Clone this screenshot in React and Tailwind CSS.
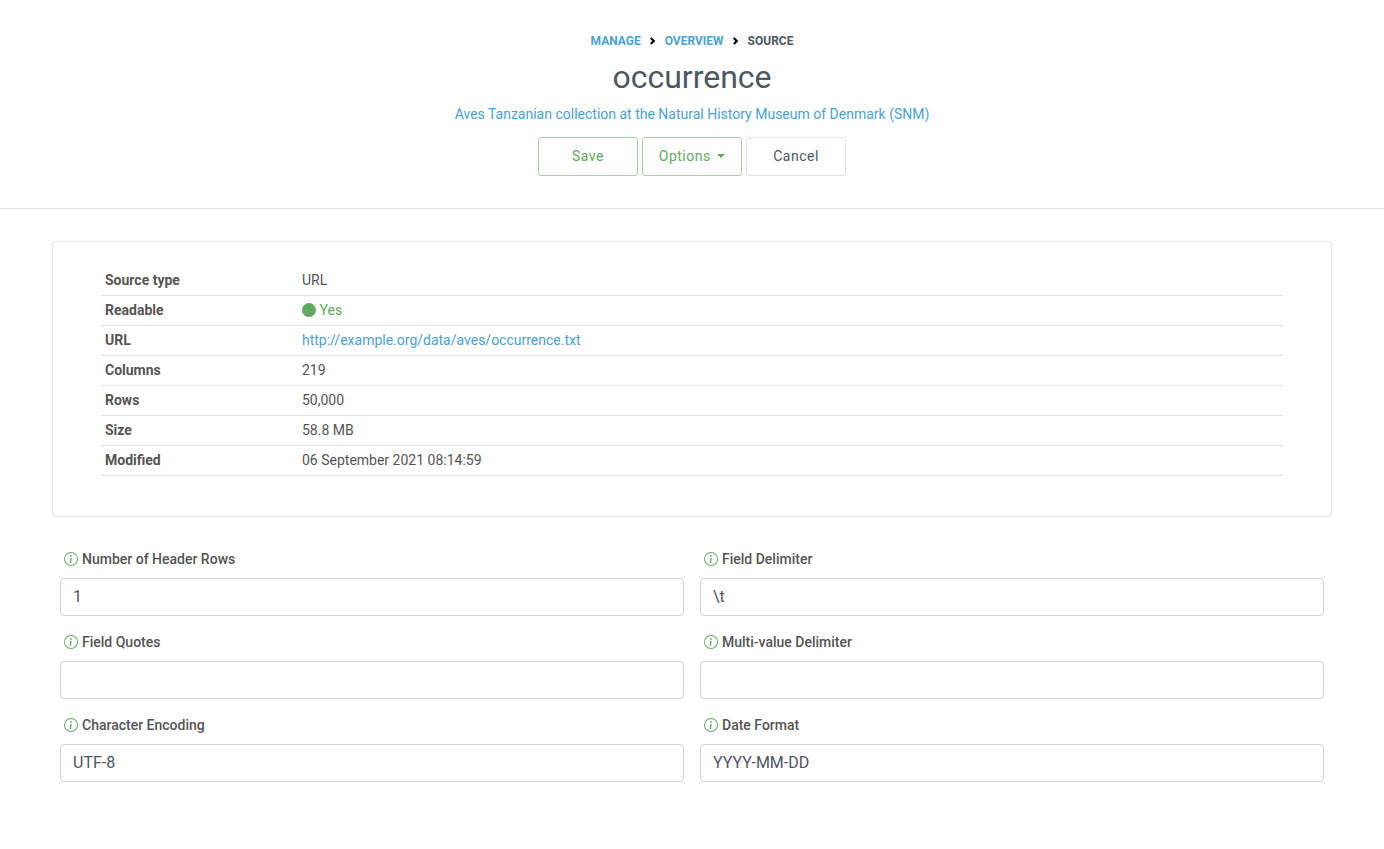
import { BsInfoCircle, BsCircleFill } from "react-icons/bs";

const fields = [
  ["Number of Header Rows", "1"],
  ["Field Delimiter", "\\t"],
  ["Field Quotes", ""],
  ["Multi-value Delimiter", ""],
  ["Character Encoding", "UTF-8"],
  ["Date Format", "YYYY-MM-DD"],
];

const details = [
  ["Source type", "URL"],
  [
    "Readable",
    <span className="flex items-center gap-[3.5px] text-[#61a861]">
      <BsCircleFill className="mb-px size-[14px]" />
      Yes
    </span>,
  ],
  [
    "URL",
    <a href="#" className="text-[#4ba2ce]">
      http://example.org/data/aves/occurrence.txt
    </a>,
  ],
  ["Columns", "219"],
  ["Rows", "50,000"],
  ["Size", "58.8 MB"],
  ["Modified", "06 September 2021 08:14:59"],
];

function Separator() {
  return (
    <svg className="h-2 w-[6px] text-black" viewBox="0 0 6 8" fill="none" stroke="currentColor" strokeWidth="2.1">
      <path d="M0.8 1 3.8 4 0.8 7" />
    </svg>
  );
}

function Header() {
  return (
    <header className="flex h-[209px] flex-col items-center border-b border-[#dee2e6]">
      <nav className="mt-8 flex h-[18px] items-center gap-[9px] text-[12px] font-bold uppercase">
        <a href="#" className="text-[#4ba2ce]">Manage</a>
        <Separator />
        <a href="#" className="text-[#4ba2ce]">Overview</a>
        <Separator />
        <span className="text-[#4e565f]">Source</span>
      </nav>
      <h1 className="mt-2 text-[32px] leading-[38px] text-[#4e565f]">occurrence</h1>
      <a href="#" className="mt-[8px] text-[14px] leading-[21px] text-[#4ba2ce]">
        Aves Tanzanian collection at the Natural History Museum of Denmark (SNM)
      </a>
      <div className="mt-3 flex gap-1 text-[14px] tracking-[0.5px]">
        <button className="h-[39px] w-[100px] rounded-[3px] border border-[#a6cfa6] text-[#61a861]">Save</button>
        <button className="flex h-[39px] w-[100px] items-center justify-center gap-[6.5px] rounded-[3px] border border-[#a6cfa6] text-[#61a861]">
          Options
          <span className="mb-px border-x-4 border-t-4 border-x-transparent border-t-[#61a861]" />
        </button>
        <button className="h-[39px] w-[100px] rounded-[3px] border border-[#dee2e6] text-[#4e565f]">Cancel</button>
      </div>
    </header>
  );
}

export default function App() {
  return (
    <div className="min-h-[849px] bg-white font-['Roboto',sans-serif]">
      <Header />
      <main className="px-[52px] pt-8">
        <section className="rounded-[4px] border border-[#dee2e6] px-12 pt-6 pb-10">
          <dl className="text-[14px] text-[#555555]">
            {details.map(([name, value]) => (
              <div key={name} className="flex h-[30px] items-center border-b border-[#dee2e6] px-1">
                <dt className="w-[197px] font-bold">{name}</dt>
                <dd>{value}</dd>
              </div>
            ))}
          </dl>
        </section>
        <form className="mt-8 grid grid-cols-2 gap-x-4 gap-y-4 px-2">
          {fields.map(([label, value]) => (
            <label key={label} className="block">
              <span className="flex h-[21px] items-center gap-1 px-1 text-[14px] font-medium text-[#555555]">
                <BsInfoCircle className="mb-px size-[14px] text-[#61a861]" />
                {label}
              </span>
              <input
                defaultValue={value}
                className="mt-2 block h-[38px] w-full rounded-[4px] border border-[#ced4da] px-3 pb-[2px] text-[16px] text-[#4e565f]"
              />
            </label>
          ))}
        </form>
      </main>
    </div>
  );
}
